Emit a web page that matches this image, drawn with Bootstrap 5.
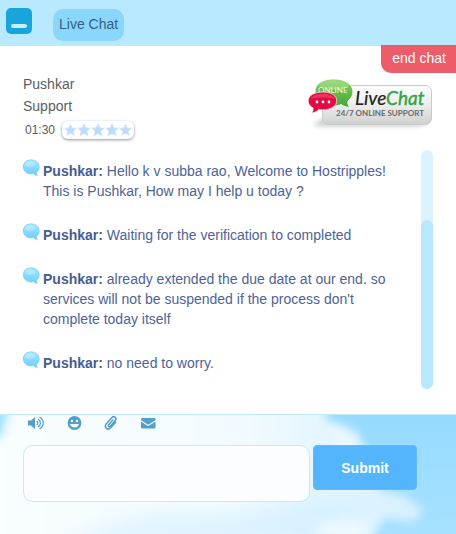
<!DOCTYPE html>
<html lang="en">
<head>
<meta charset="utf-8">
<meta name="viewport" content="width=device-width, initial-scale=1">
<title>Live Chat</title>
<link href="https://cdn.jsdelivr.net/npm/bootstrap@5.3.0/dist/css/bootstrap.min.css" rel="stylesheet">
<style>
body{font-family:"Liberation Sans",Arial,sans-serif;font-size:14px;line-height:20px;background:#fff;color:#595d62}
.topbar{background:#b9e9fe;height:46px;padding:8px 6px 4px}
.min-btn{width:26px;height:26px;border-radius:5px;background:#17a5db;padding:16px 5px 6px}
.min-btn span{display:block;height:4px;border-radius:2px;background:#c9effc}
.chat-tab{margin-left:21px;margin-top:1px;padding:5px 6px 7px;border-radius:10px;background:#8ad7fe;color:#35617f}
.end-btn{background:#ed5d69;color:#fff;padding:3px 10px 5px 11px;border-radius:0 0 0 10px;line-height:20px;margin-top:-1px}
.agent-row{padding:0 23px}
.agent-name{line-height:22px}
.timer{font-size:12px;line-height:18px;padding-left:2px;gap:7px}
.stars{border-radius:6px;padding:2px;background:#fff;box-shadow:0 1px 3px #8b929c}
.logo-live{width:126px;height:54px;margin-top:4px}
.chat-area{padding:11px 23px 25px}
.messages{padding:11px 0 16px;gap:24px;color:#4d6494}
.messages b{color:#465d93}
.bubble{width:18px;height:18px;margin:-2px 3px 0 -1px}
.track{width:12px;border-radius:6px;background:#dcf3ff;padding-top:70px}
.thumb{height:100%;border-radius:6px;background:#b8e8fd}
.composer{background:#9addfe;border-top:1px solid #bfeaf8;padding:0 23px 32px;overflow:hidden}
.tools{height:30px;padding-left:4px;gap:19px}
.tools button{width:18px;height:16px;color:#529fc9}
.tools svg{display:block;width:18px;height:16px}
.entry{gap:3px;margin-right:16px}
.entry textarea{height:57px;border:1px solid #c5eaf5;border-radius:10px;background:#fcfdff;resize:none;font-size:14px;min-width:0}
.send{width:104px;height:45px;border-radius:4px;background:#54b5fd;border:1px solid #62bbf6;color:#fff;font-size:14px}
</style>
<script src="https://cdn.jsdelivr.net/npm/bootstrap@5.3.0/dist/js/bootstrap.bundle.min.js"></script>
</head>
<body class="min-vh-100 d-flex flex-column">
<svg class="position-absolute" width="0" height="0" aria-hidden="true">
  <defs>
    <linearGradient id="bubbleFill" x1="0" y1="0" x2="0" y2="1"><stop offset="0" stop-color="#a8e7fd"/><stop offset="1" stop-color="#69cdfa"/></linearGradient>
    <symbol id="bubble" viewBox="0 0 18 18"><path d="M9 .8C4.500.8 1.300 3.700 1.300 7.800s3.300 7.200 7.700 7.200c1 0 1.900-.1 2.700-.4.700 1 2 1.700 3.700 2-.8-.9-1-2-.7-3.400 1.500-1.200 2.500-3.100 2.500-5.400 0-4.100-3.400-7-8.200-7z" fill="url(#bubbleFill)" stroke="#76c8ec" stroke-width=".7"/><ellipse cx="8" cy="5" rx="5" ry="3" fill="#c5efff" opacity=".5"/></symbol>
    <symbol id="star" viewBox="0 0 13 13"><path d="M6.500.7 8.200 4.500l4.100.4-3.100 2.800.9 4.100-3.600-2.100-3.600 2.100.9-4.100L.7 4.900l4.100-.4z" fill="#b9dcff" stroke="#d2e3fa" stroke-width=".8"/></symbol>
  </defs>
</svg>
<header class="topbar d-flex align-items-start">
  <button type="button" class="min-btn border-0" aria-label="Minimize"><span></span></button>
  <a href="#chat" class="chat-tab text-decoration-none">Live Chat</a>
</header>
<main id="chat">
  <div class="d-flex justify-content-end"><button type="button" class="end-btn border-0">end chat</button></div>
  <section class="agent-row d-flex justify-content-between align-items-start">
    <div>
      <div class="agent-name">Pushkar</div>
      <div class="agent-name">Support</div>
      <div class="timer d-flex align-items-center mt-1"><span>01:30</span>
        <span class="stars d-flex" role="img" aria-label="Rating">
          <svg width="13" height="14"><use href="#star"/></svg><svg width="14" height="14"><use href="#star"/></svg><svg width="14" height="14"><use href="#star"/></svg><svg width="14" height="14"><use href="#star"/></svg><svg width="13" height="14"><use href="#star"/></svg>
        </span>
      </div>
    </div>
    <svg class="logo-live" viewBox="-2 -1 126 54" role="img" aria-label="Live chat, 24/7 online support">
      <defs>
        <linearGradient id="plate" x1="0" y1="0" x2="0" y2="1"><stop offset="0" stop-color="#fdfdfd"/><stop offset=".5" stop-color="#ededed"/><stop offset="1" stop-color="#cfd0d0"/></linearGradient>
        <linearGradient id="leaf" x1="0" y1="0" x2="0" y2="1"><stop offset="0" stop-color="#83cf5f"/><stop offset="1" stop-color="#43a53a"/></linearGradient>
        <filter id="soft" x="-20%" y="-60%" width="140%" height="220%"><feGaussianBlur stdDeviation="2"/></filter>
      </defs>
      <path d="M4 47 13 40h104v7l-12 2H10z" fill="#999" opacity=".4" filter="url(#soft)"/>
      <rect x="13.500" y="7.500" width="109" height="39" rx="6" fill="url(#plate)" stroke="#c8c9c9"/>
      <path d="M25 1C13 1 6 6 6 14s8 14 18 14c3 0 6-.5 8-1.500 2 1.500 5 2.800 9 3-2-2-2.500-4-2-6.500 3-2.500 5-5.500 5-9C44 6 36 1 25 1z" fill="url(#leaf)" stroke="#f7fbf5"/>
      <ellipse cx="25" cy="7" rx="15" ry="5" fill="#c0edaa" opacity=".4"/>
      <text x="9" y="15" font-size="8" font-family="Lato,sans-serif" fill="#eaffdf">ONLINE</text>
      <path d="M14 14C5 14-.8 17.500-.8 23c0 3 2 5.500 5 7 0 2-.5 3.500-1.500 5 3-.5 5.500-1.700 7-3.500 10 1.500 18-2.500 18-8.500C27.700 17.500 22 14 14 14z" fill="#e40b42" stroke="#fff" stroke-width=".6"/>
      <path d="M2 21c2-7 21-7 24 0-6-2-17-2-24 0z" fill="#fb718a" opacity=".4"/>
      <circle cx="8" cy="24" r="1.400" fill="#fff"/><circle cx="14" cy="24" r="1.400" fill="#fff"/><circle cx="20" cy="24" r="1.400" fill="#fff"/>
      <text x="46" y="27" font-size="19" font-style="italic" font-family="Lato,sans-serif" fill="#202220" stroke="#202220" stroke-width=".2">Live<tspan fill="#35a443" stroke="#35a443" stroke-width=".4">Chat</tspan></text>
      <text x="27" y="38" font-size="8" font-weight="700" font-family="Lato,sans-serif" fill="#67696a">24/7 ONLINE SUPPORT</text>
    </svg>
  </section>
  <section class="chat-area d-flex justify-content-between">
    <div class="messages d-flex flex-column">
      <div class="d-flex"><svg class="bubble flex-shrink-0"><use href="#bubble"/></svg><div><b>Pushkar:</b> Hello k v subba rao, Welcome to Hostripples!<br>This is Pushkar, How may I help u today ?</div></div>
      <div class="d-flex"><svg class="bubble flex-shrink-0"><use href="#bubble"/></svg><div><b>Pushkar:</b> Waiting for the verification to completed</div></div>
      <div class="d-flex"><svg class="bubble flex-shrink-0"><use href="#bubble"/></svg><div><b>Pushkar:</b> already extended the due date at our end. so<br>services will not be suspended if the process don't<br>complete today itself</div></div>
      <div class="d-flex"><svg class="bubble flex-shrink-0"><use href="#bubble"/></svg><div><b>Pushkar:</b> no need to worry.</div></div>
    </div>
    <div class="track flex-shrink-0"><div class="thumb"></div></div>
  </section>
</main>
<footer class="composer position-relative flex-grow-1">
  <svg class="position-absolute top-0 start-0 w-100 h-100" viewBox="0 0 456 120" preserveAspectRatio="none" aria-hidden="true">
    <defs>
      <filter id="cloud" filterUnits="userSpaceOnUse" x="-120" y="-120" width="700" height="360" color-interpolation-filters="sRGB"><feGaussianBlur stdDeviation="10"/></filter>
      <filter id="wisp" filterUnits="userSpaceOnUse" x="-120" y="-120" width="700" height="360" color-interpolation-filters="sRGB"><feGaussianBlur stdDeviation="5"/></filter>
      <linearGradient id="haze" x1="0" y1="0" x2="1" y2="0"><stop offset="0" stop-color="#fafeff"/><stop offset=".6" stop-color="#f3fbff"/><stop offset="1" stop-color="#d5f0ff"/></linearGradient>
      <linearGradient id="air" x1="0" y1="0" x2="0" y2="1"><stop offset="0" stop-color="#96dbff"/><stop offset="1" stop-color="#a6e1ff"/></linearGradient>
    </defs>
    <rect width="456" height="120" fill="url(#air)"/>
    <path d="M-60-60H318L326 4 356 16 366 38 380 76 406 82 424 96 414 108 384 104 372 124 360 170H-60z" fill="url(#haze)" filter="url(#wisp)"/>
    <path d="M60 130Q130 98 190 100T320 82L370 92 345 112 325 130z" fill="#cdedff" opacity=".6" filter="url(#cloud)"/>
    <ellipse cx="342" cy="115" rx="28" ry="9" fill="#f4fcff" opacity=".7" filter="url(#wisp)"/>
    <path d="M326 12 350 20 363 36 340 32z" fill="#f4fcff" opacity=".6" filter="url(#wisp)"/>
    <path d="M-30-20H16L5 6 1 23H-30z" fill="#83dafe" opacity=".8" filter="url(#wisp)"/>
  </svg>
  <div class="tools d-flex position-relative">
    <button type="button" class="border-0 bg-transparent p-0" aria-label="Sound"><svg viewBox="0 0 18 16"><path d="M1 5.500h3L8 2v12l-4-3.500H1z" fill="currentColor"/><path d="M9.600 6c1.400 1 1.400 3 0 4M11 4c3.200 2 3.200 6 0 8M12.500 2c5 3 5 9 0 12" fill="none" stroke="currentColor" stroke-width="1.200"/></svg></button>
    <button type="button" class="border-0 bg-transparent p-0" aria-label="Emoji"><svg viewBox="0 0 18 16"><circle cx="10.500" cy="8" r="6.900" fill="currentColor"/><circle cx="8" cy="6" r="1.200" fill="#effaff"/><circle cx="13" cy="6" r="1.200" fill="#effaff"/><path d="M6 9h9c-.6 4.600-8.400 4.600-9 0z" fill="#effaff"/></svg></button>
    <button type="button" class="border-0 bg-transparent p-0" aria-label="Attach file"><svg viewBox="0 0 18 16"><path d="m11.800 5-4.300 5c-.7 1.300.8 2.300 1.800 1.300l5-5.800c2-2.600-1-5.200-3.400-2.900L5.200 8.900c-2.500 3.500 1.400 7 4.500 3.900l5-5.500" fill="none" stroke="currentColor" stroke-width="1.500" stroke-linecap="round"/></svg></button>
    <button type="button" class="border-0 bg-transparent p-0" aria-label="Email"><svg viewBox="0 0 18 16"><rect x="3" y="3" width="14.500" height="10.500" rx="1.200" fill="currentColor"/><path d="M2.500 5.500 9 9.700q1.200.8 2.400 0L18 5.500" fill="none" stroke="#f3fbff" stroke-width="1.100"/></svg></button>
  </div>
  <form class="entry d-flex align-items-start position-relative">
    <textarea class="form-control flex-grow-1" aria-label="Message"></textarea>
    <button type="submit" class="send flex-shrink-0 fw-bold">Submit</button>
  </form>
</footer>
</body>
</html>
